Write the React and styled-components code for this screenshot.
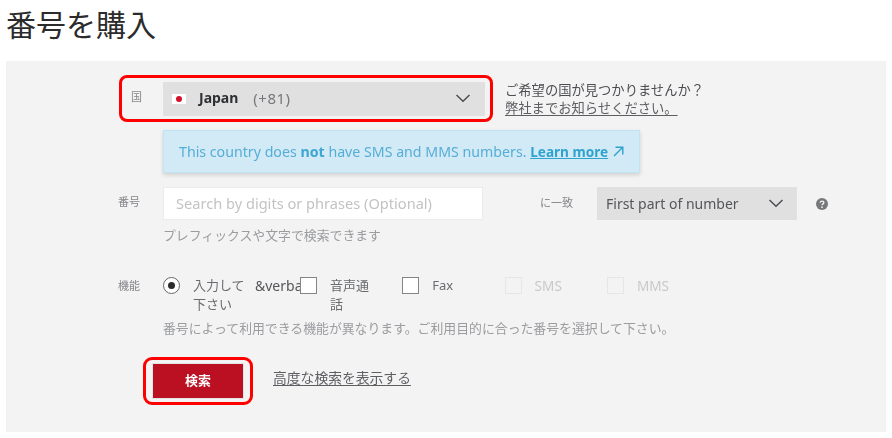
import React from "react";
import styled, { createGlobalStyle } from "styled-components";

const Global = createGlobalStyle`
  html, body {
    margin: 0;
    background: #fff;
    font-family: "Noto Sans", "Noto Sans CJK JP", sans-serif;
    color: #55565a;
  }
`;

const Page = styled.div`
  width: 892px;
  height: 438px;
  padding: 0 6px;
  box-sizing: border-box;
  overflow: hidden;
`;

const Title = styled.h1`
  margin: 0;
  height: 61px;
  padding: 2px 0 0 0;
  box-sizing: border-box;
  font-size: 30px;
  line-height: 42px;
  font-weight: 400;
  color: #2b2b2b;
  font-family: "Noto Sans CJK JP", sans-serif;
`;

const Panel = styled.div`
  width: 880px;
  height: 371px;
  padding-top: 14px;
  box-sizing: border-box;
  background: #f3f3f3;
  font-size: 13px;
  filter: blur(0.4px);
`;

const CountryRow = styled.div`
  display: flex;
  align-items: center;
  margin-left: 113px;
  gap: 12px;
`;

const Highlight = styled.div`
  display: flex;
  align-items: center;
  width: 374px;
  height: 47px;
  box-sizing: border-box;
  border: 3px solid #ff0000;
  border-radius: 8px;
  padding: 0 5px 0 9px;
`;

const CountryLabel = styled.span`
  width: 32px;
  font-size: 11px;
  color: #8a8a8a;
  margin-top: -5px;
`;

const SelectBox = styled.div`
  display: flex;
  align-items: center;
  width: ${(p) => p.$width}px;
  height: ${(p) => p.$height}px;
  padding: 0 ${(p) => p.$padRight}px 0 9px;
  box-sizing: border-box;
  background: #e0e0e0;
  color: #55565a;
  font-size: 14px;
  justify-content: space-between;
`;

const CountryValue = styled.span`
  display: flex;
  align-items: center;
  padding-bottom: 2px;
`;

const Flag = styled.svg`
  width: 14px;
  height: 10px;
  margin: 2px 13px 0 0;
`;

const CountryName = styled.b`
  color: #2f3033;
  font-weight: 700;
  margin-right: 15px;
`;

const Dial = styled.span`
  color: #77787c;
  font-size: 15px;
  letter-spacing: 0.5px;
`;

const Note = styled.div`
  font-size: 13.3px;
  line-height: 18px;
  color: #4d4e52;
`;

const UnderLink = styled.a`
  color: #5d5e62;
  text-decoration: underline;
  text-underline-offset: 2px;
`;

const Alert = styled.div`
  display: flex;
  align-items: center;
  width: 477px;
  height: 43px;
  margin: 8px 0 0 157px;
  padding-left: 15px;
  box-sizing: border-box;
  background: #d2e9f6;
  border: 1px solid #c0e4f3;
  color: #55aed6;
  font-size: 14.2px;
  box-shadow: 0 2px 4px rgba(0, 0, 0, 0.15);
  white-space: pre;
`;

const AlertBold = styled.b`
  color: #3ea6d2;
`;

const AlertLink = styled.a`
  color: #2fa3d0;
  font-size: 13.6px;
  font-weight: 700;
  text-decoration: underline;
`;

const ExternalIcon = styled.svg`
  width: 11px;
  height: 11px;
  margin-left: 5px;
`;

const Row = styled.div`
  display: flex;
  align-items: ${(p) => p.$align || "center"};
  margin: ${(p) => p.$top}px 0 0 112px;
`;

const RowLabel = styled.span`
  width: 45px;
  margin-top: ${(p) => p.$lift || 0}px;
  font-size: 11px;
  color: #85868a;
`;

const SearchInput = styled.div`
  width: 320px;
  height: 33px;
  padding: 0 0 2px 12px;
  box-sizing: border-box;
  display: flex;
  align-items: center;
  background: #fff;
  border: 1px solid #ebebeb;
  color: #c3c3c3;
  font-size: 14.6px;
`;

const MatchLabel = styled.span`
  width: 57px;
  margin: -4px 0 0 57px;
  font-size: 11px;
  color: #85868a;
`;

const HelpIcon = styled.svg`
  width: 12px;
  height: 12px;
  margin-left: 19px;
`;

const Hint = styled.div`
  margin: ${(p) => p.$top}px 0 0 157px;
  font-size: 12.87px;
  line-height: 18px;
  color: #9b9c9f;
`;

const Options = styled.div`
  display: flex;
`;

const Option = styled.div`
  display: flex;
  width: ${(p) => p.$width}px;
  gap: 13px;
  font-size: 13px;
  line-height: 19px;
  color: ${(p) => (p.$disabled ? "#c9c9c9" : "#6a6b6f")};
`;

const Radio = styled.span`
  flex: none;
  width: 17px;
  height: 17px;
  box-sizing: border-box;
  border: 1.5px solid #66676b;
  border-radius: 50%;
  background: #fff;
  display: flex;
  align-items: center;
  justify-content: center;
  &::after {
    content: "";
    width: 7px;
    height: 7px;
    border-radius: 50%;
    background: #2b2b2b;
  }
`;

const Check = styled.span`
  flex: none;
  width: 17px;
  height: 17px;
  box-sizing: border-box;
  background: ${(p) => (p.$disabled ? "#f3f3f3" : "#fff")};
  border: 1.5px solid ${(p) => (p.$disabled ? "#e6e6e6" : "#858585")};
`;

const OptionText = styled.span`
  flex: none;
  width: ${(p) => p.$width || 46}px;
  margin-top: -1px;
  font-size: ${(p) => p.$size || 13}px;
`;

const Verbatim = styled.span`
  flex: none;
  margin: -1px 0 0 -4px;
  font-size: 14px;
  color: #55565a;
  white-space: nowrap;
`;

const Actions = styled.div`
  display: flex;
  align-items: center;
  margin: 20px 0 0 137px;
  gap: 20px;
  font-size: 13.8px;
`;

const ButtonFrame = styled.div`
  width: 110px;
  height: 48px;
  box-sizing: border-box;
  border: 3px solid #ff0000;
  border-radius: 9px;
  display: flex;
  align-items: center;
  justify-content: center;
`;

const SearchButton = styled.button`
  width: 92px;
  height: 36px;
  padding: 0 0 4px;
  border: 1px solid #e4e4e4;
  background: #bb1021;
  color: #fff;
  font: 700 13px "Noto Sans CJK JP", sans-serif;
`;

const AdvancedLink = styled(UnderLink)`
  margin-top: -8px;
`;

const Chevron = ({ size = 14 }) => (
  <svg width={size} height={size * 0.6} viewBox="0 0 14 8" fill="none" stroke="#4a4b4f" strokeWidth="1.4">
    <path d="M0.5 0.7 7 7 13.5 0.7" />
  </svg>
);

const options = [
  { label: "音声通話" },
  { label: "Fax" },
  { label: "SMS", disabled: true, size: 13.6 },
  { label: "MMS", disabled: true, size: 13.6 },
];

export default function App() {
  return (
    <Page>
      <Global />
      <Title>番号を購入</Title>
      <Panel>
        <CountryRow>
          <Highlight>
            <CountryLabel>国</CountryLabel>
            <SelectBox $width={322} $height={34} $padRight={15}>
              <CountryValue>
                <Flag viewBox="0 0 14 10">
                  <rect width="14" height="10" fill="#fff" />
                  <circle cx="7" cy="5" r="3" fill="#d3102a" />
                </Flag>
                <CountryName>Japan</CountryName>
                <Dial>(+81)</Dial>
              </CountryValue>
              <Chevron />
            </SelectBox>
          </Highlight>
          <Note>
            ご希望の国が見つかりませんか？
            <br />
            <UnderLink>弊社までお知らせください。</UnderLink>
          </Note>
        </CountryRow>
        <Alert>
          This country does <AlertBold>not</AlertBold> have SMS and MMS numbers.{" "}
          <AlertLink>Learn more</AlertLink>
          <ExternalIcon viewBox="0 0 11 11" fill="none" stroke="#2fa3d0" strokeWidth="1.4">
            <path d="M1 10 9.5 1.5M2.5 1.2H9.8V8.5" />
          </ExternalIcon>
        </Alert>
        <Row $top={14}>
          <RowLabel $lift={-5}>番号</RowLabel>
          <SearchInput>Search by digits or phrases (Optional)</SearchInput>
          <MatchLabel>に一致</MatchLabel>
          <SelectBox $width={200} $height={33} $padRight={14}>
            First part of number
            <Chevron />
          </SelectBox>
          <HelpIcon viewBox="0 0 12 12">
            <circle cx="6" cy="6" r="6" fill="#77787a" />
            <path d="M4.2 4.6C4.3 2.6 7.9 2.7 7.9 4.6 7.9 5.9 6 5.9 6 7.3" fill="none" stroke="#f3f3f3" strokeWidth="1.3" />
            <circle cx="6" cy="9.2" r="0.85" fill="#f3f3f3" />
          </HelpIcon>
        </Row>
        <Hint $top={6}>プレフィックスや文字で検索できます</Hint>
        <Row $top={33} $align="flex-start">
          <RowLabel>機能</RowLabel>
          <Options>
            <Option $width={137}>
              <Radio />
              <OptionText $width={53}>入力して下さい</OptionText>
              <Verbatim>&amp;verba</Verbatim>
            </Option>
            {options.map((o) => (
              <Option key={o.label} $width={102.3} $disabled={o.disabled}>
                {o.disabled ? <Check $disabled /> : <Check />}
                <OptionText $size={o.size}>{o.label}</OptionText>
              </Option>
            ))}
          </Options>
        </Row>
        <Hint $top={5}>番号によって利用できる機能が異なります。ご利用目的に合った番号を選択して下さい。</Hint>
        <Actions>
          <ButtonFrame>
            <SearchButton>検索</SearchButton>
          </ButtonFrame>
          <AdvancedLink>高度な検索を表示する</AdvancedLink>
        </Actions>
      </Panel>
    </Page>
  );
}
